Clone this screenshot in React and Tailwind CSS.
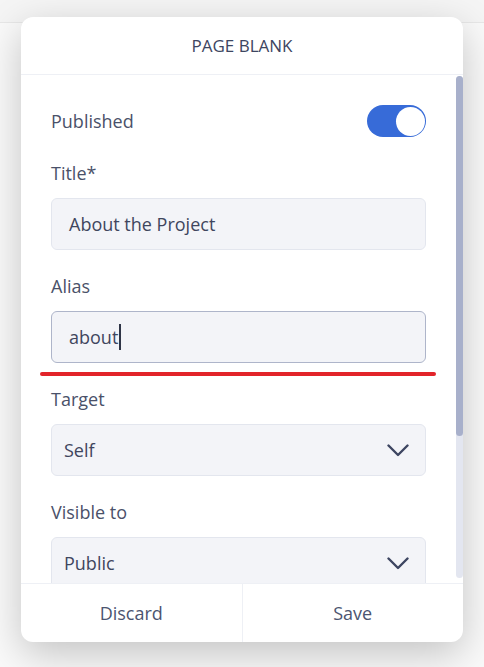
const Field = ({ label, children }) => {
  return (
    <div className="mt-[24px]">
      <div className="text-[18px] leading-6 text-[#4a5169]">{label}</div>
      <div className="mt-[13px]">{children}</div>
    </div>
  );
};

const Chevron = () => (
  <svg width="22" height="13" viewBox="0 0 22 13" fill="none">
    <path
      d="M1.5 1.5l9.5 9.5 9.5-9.5"
      stroke="#3d4561"
      strokeWidth="2.4"
      strokeLinecap="round"
      strokeLinejoin="round"
    />
  </svg>
);

const Select = ({ value }) => (
  <div className="flex h-[52px] items-center justify-between rounded-[6px] border border-[#e3e6ee] bg-[#f3f4f8] pl-[12px] pr-[16px]">
    <span className="text-[18px] text-[#3f465e]">{value}</span>
    <Chevron />
  </div>
);

export default function App() {
  return (
    <div className="h-[667px] overflow-hidden bg-[linear-gradient(to_bottom,#f5f5f5_0,#f5f5f5_22px,#e8e8e8_22px,#e8e8e8_23px,#fafafa_23px)] px-[21px] pt-[17px] font-['Open_Sans',sans-serif]">
      <div className="flex h-[625px] flex-col overflow-hidden rounded-[12px] bg-white shadow-[0_12px_40px_rgba(0,0,0,0.22)]">
        {/* header */}
        <div className="flex h-[58px] shrink-0 items-center justify-center border-b border-[#eef0f5] text-[17px] text-[#3d4561]">
          PAGE BLANK
        </div>

        {/* body */}
        <div className="flex h-[508px] shrink-0">
          <div className="flex-1 overflow-hidden px-[30px] pt-[30px]">
            <div className="flex h-[32px] items-center justify-between">
              <span className="text-[18px] text-[#4a5169]">Published</span>
              <div className="flex h-[32px] w-[59px] items-center justify-end rounded-full bg-[#376bd8] p-[1.5px]">
                <div className="h-[29px] w-[29px] rounded-full bg-white" />
              </div>
            </div>

            <Field label="Title*">
              <div className="flex h-[52px] items-center rounded-[6px] border border-[#e3e6ee] bg-[#f3f4f8] px-[17px] text-[18px] text-[#3f465e]">
                About the Project
              </div>
            </Field>

            <Field label="Alias">
              <div className="relative">
                <div className="flex h-[52px] items-center rounded-[6px] border border-[#aeb5ca] bg-[#f3f4f8] px-[17px] text-[18px] text-[#3f465e]">
                  about
                  <span className="ml-[1px] inline-block h-[26px] w-[1.5px] bg-[#2f3547]" />
                </div>
                <div className="absolute left-[-11px] right-[-10px] top-[61px] h-[3.5px] rounded-full bg-[#e2242a]" />
              </div>
            </Field>

            <Field label="Target">
              <Select value="Self" />
            </Field>

            <Field label="Visible to">
              <Select value="Public" />
            </Field>
          </div>

          {/* scrollbar */}
          <div className="mb-[5px] mt-[1px] w-[7px] shrink-0 rounded-full bg-[#e3e6f0]">
            <div className="h-[360px] rounded-full bg-[#a8b0cb]" />
          </div>
        </div>

        {/* footer */}
        <div className="flex h-[59px] shrink-0 border-t border-[#eef0f5] text-[18px] text-[#4c5470]">
          <button className="flex flex-1 items-center justify-center">Discard</button>
          <div className="w-px bg-[#eef0f5]" />
          <button className="flex flex-1 items-center justify-center">Save</button>
        </div>
      </div>
    </div>
  );
}
